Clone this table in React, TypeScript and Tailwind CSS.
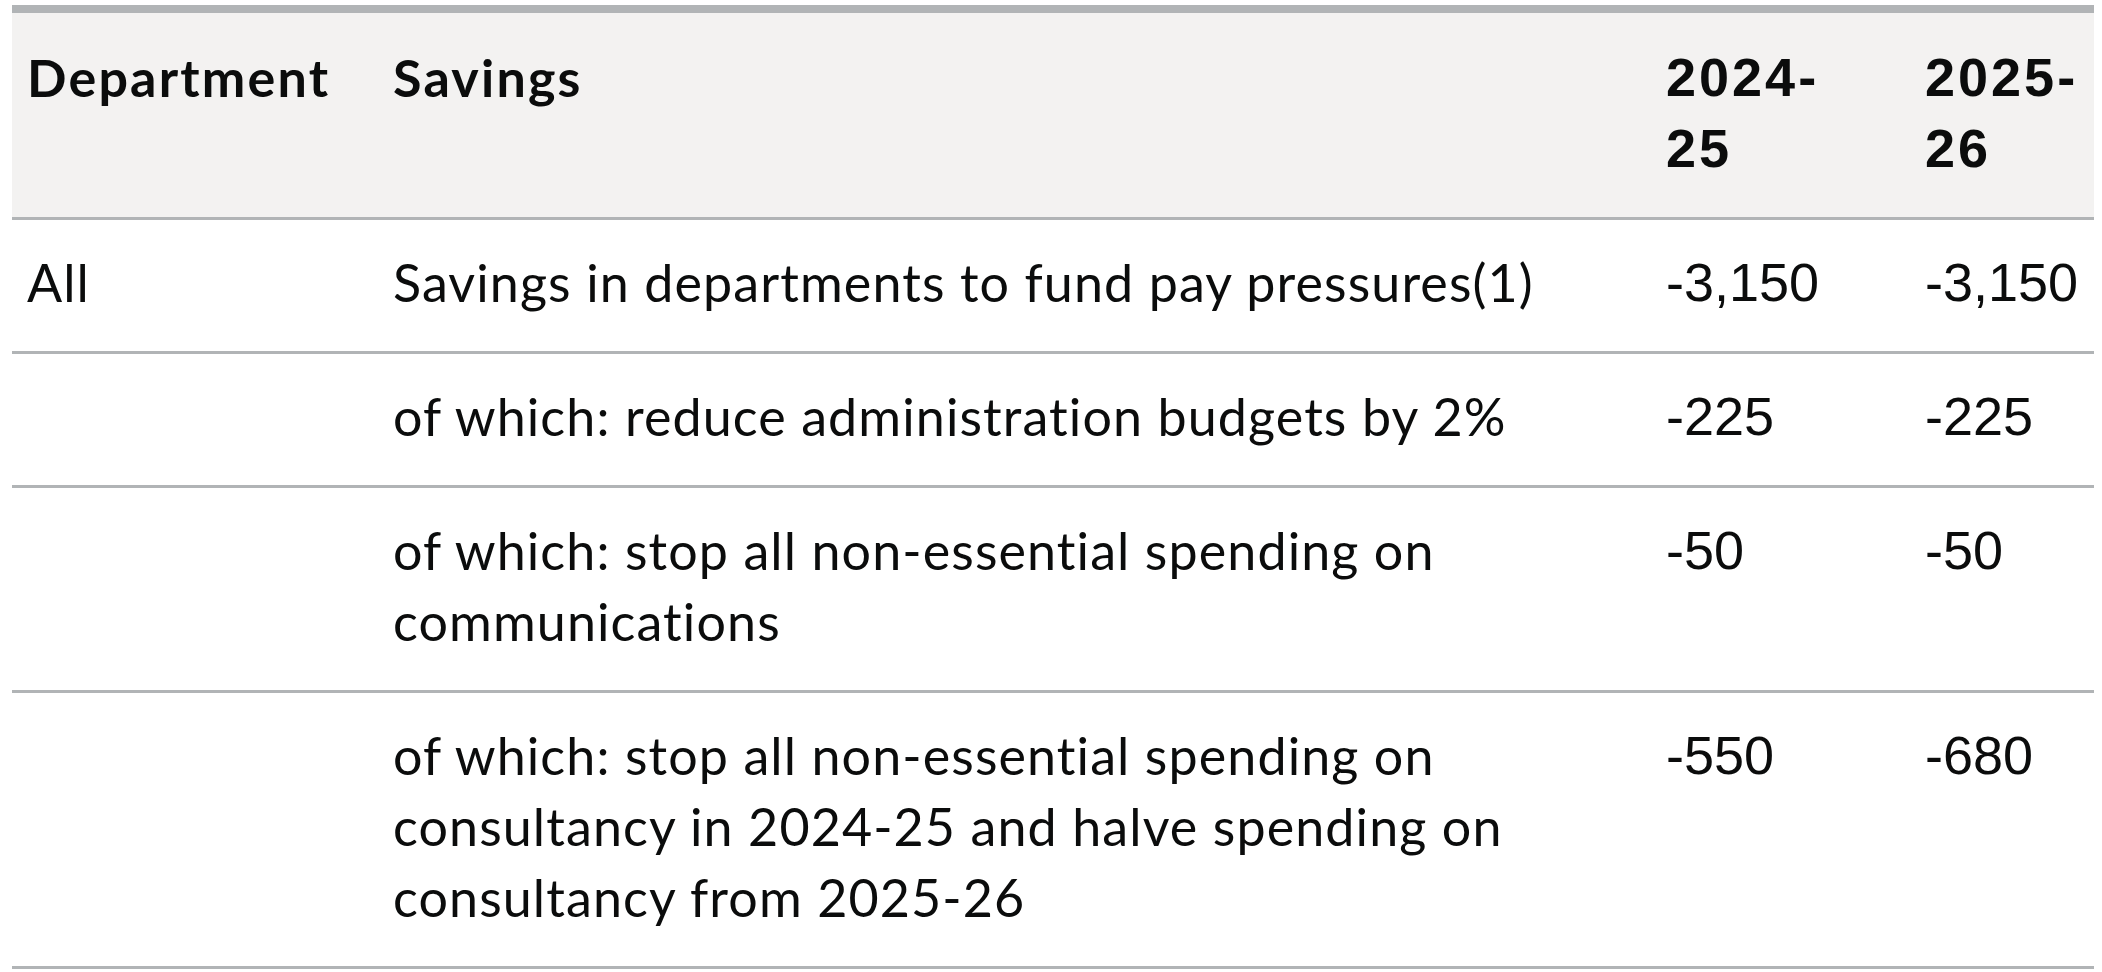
const text = "font-['Lato',sans-serif] [font-variant-ligatures:none]";
const nums = "font-['Liberation_Sans',Arial,sans-serif]";

type Row = {
  dept: string;
  lines: string[];
  a: string;
  b: string;
};

const rows: Row[] = [
  { dept: "All", lines: ["Savings in departments to fund pay pressures(1)"], a: "-3,150", b: "-3,150" },
  { dept: "", lines: ["of which: reduce administration budgets by 2%"], a: "-225", b: "-225" },
  {
    dept: "",
    lines: ["of which: stop all non-essential spending on", "communications"],
    a: "-50",
    b: "-50",
  },
  {
    dept: "",
    lines: [
      "of which: stop all non-essential spending on",
      "consultancy in 2024-25 and halve spending on",
      "consultancy from 2025-26",
    ],
    a: "-550",
    b: "-680",
  },
];

export default function App() {
  return (
    <div className="min-h-screen bg-white pt-[5px] pl-[12px] text-[#0b0c0c]">
      <table className="w-[2082px] table-fixed border-collapse border-t-[8px] border-[#b1b4b6]">
        <colgroup>
          <col className="w-[381px]" />
          <col className="w-[1273px]" />
          <col className="w-[259px]" />
          <col className="w-[169px]" />
        </colgroup>
        <thead>
          <tr className="bg-[#f3f2f1] border-b-[3px] border-[#b1b4b6] align-top">
            <th className={`${text} pl-[15px] pt-[29px] pb-[33px] text-left text-[52px] leading-[71px] font-bold tracking-[2.2px] whitespace-nowrap`}>
              Department
            </th>
            <th className={`${text} pt-[29px] pb-[33px] text-left text-[52px] leading-[71px] font-bold tracking-[2.2px]`}>
              Savings
            </th>
            <th className={`${nums} pt-[29px] pb-[33px] text-left text-[54px] leading-[71px] font-bold tracking-[3px]`}>
              2024-
              <br />
              25
            </th>
            <th className={`${nums} pt-[29px] pb-[33px] text-left text-[54px] leading-[71px] font-bold tracking-[3px]`}>
              2025-
              <br />
              26
            </th>
          </tr>
        </thead>
        <tbody>
          {rows.map((r, i) => (
            <tr key={i} className="border-b-[3px] border-[#b1b4b6] align-top">
              <td className={`${text} pl-[15px] pt-[27px] pb-[33px] text-[52px] leading-[71px] tracking-[1.1px]`}>{r.dept}</td>
              <td className={`${text} pt-[27px] pb-[33px] text-[52px] leading-[71px] tracking-[1.1px]`}>
                {r.lines.map((l, j) => (
                  <div key={j} className="whitespace-nowrap">
                    {l}
                  </div>
                ))}
              </td>
              <td className={`${nums} pt-[27px] pb-[33px] text-[54px] leading-[71px]`}>{r.a}</td>
              <td className={`${nums} pt-[27px] pb-[33px] text-[54px] leading-[71px]`}>{r.b}</td>
            </tr>
          ))}
        </tbody>
      </table>
    </div>
  );
}
